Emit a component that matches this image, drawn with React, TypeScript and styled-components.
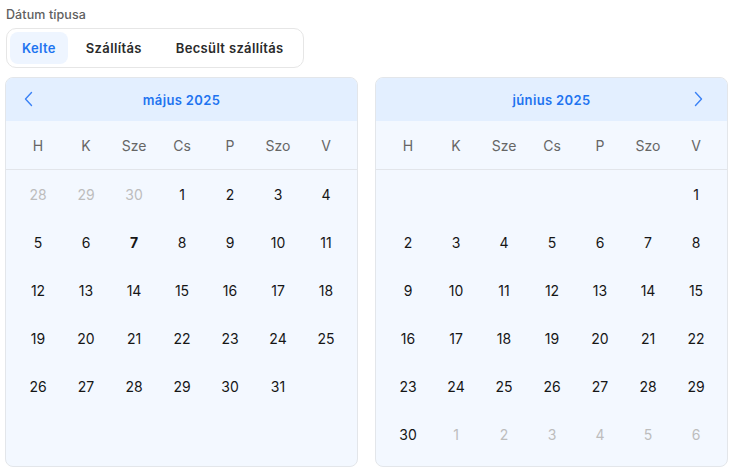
import React from "react";
import styled, { createGlobalStyle } from "styled-components";

const Global = createGlobalStyle`
  html, body { margin: 0; padding: 0; background: #ffffff; }
  body { font-family: "Inter", "DejaVu Sans", sans-serif; }
`;

const Page = styled.div`
  padding: 6px 5px 0 5px;
  display: flex;
  flex-direction: column;
`;

const Label = styled.div`
  font-size: 12.5px;
  color: #606060;
  font-weight: 500;
  line-height: 18px;
  padding-left: 1px;
  margin-bottom: 4px;
  letter-spacing: 0.1px;
`;

const TabGroup = styled.div`
  display: flex;
  align-self: flex-start;
  box-sizing: border-box;
  margin-left: 1px;
  padding: 3px;
  gap: 2px;
  border: 1px solid #e6e6e6;
  border-radius: 10px;
  height: 40px;
  background: #fff;
`;

const Tab = styled.button<{ $active?: boolean }>`
  border: none;
  font-family: inherit;
  font-size: 13px;
  font-weight: 600;
  letter-spacing: 0.35px;
  padding: 0 ${(p) => (p.$active ? "12px" : "16px")};
  border-radius: 8px;
  background: ${(p) => (p.$active ? "#eef5ff" : "transparent")};
  color: ${(p) => (p.$active ? "#1f74f0" : "#2a2a2a")};
  cursor: pointer;
`;

const Calendars = styled.div`
  display: flex;
  gap: 17px;
  margin-top: 9px;
`;

const Card = styled.div`
  width: 353px;
  height: 390px;
  box-sizing: border-box;
  border: 1px solid #e3e6ea;
  border-radius: 8px;
  background: #f3f8ff;
  overflow: hidden;
  display: flex;
  flex-direction: column;
`;

const Header = styled.div`
  height: 43px;
  background: #e3efff;
  display: flex;
  align-items: center;
  justify-content: center;
  position: relative;
  font-size: 13px;
  font-weight: 600;
  letter-spacing: 0.35px;
  color: #1f74f0;
`;

const NavButton = styled.span<{ $side: "left" | "right" }>`
  position: absolute;
  top: 12px;
  ${(p) => (p.$side === "left" ? "left: 14px;" : "right: 21px;")}
  width: 16px;
  height: 18px;
  display: flex;
  align-items: center;
  justify-content: center;
`;

const WeekRow = styled.div`
  display: grid;
  grid-template-columns: repeat(7, 48px);
  justify-content: center;
  height: 48px;
  align-items: center;
  border-bottom: 1px solid #e2e5ea;
  padding-left: 1px;
`;

const WeekDay = styled.div`
  text-align: center;
  font-size: 14px;
  color: #666;
  padding-top: 1px;
`;

const Grid = styled.div`
  display: grid;
  grid-template-columns: repeat(7, 48px);
  grid-auto-rows: 48px;
  justify-content: center;
  padding-left: 1px;
`;

const Day = styled.div<{ $muted?: boolean; $today?: boolean }>`
  display: flex;
  align-items: center;
  justify-content: center;
  font-size: 14px;
  font-weight: ${(p) => (p.$today ? 700 : 400)};
  color: ${(p) => (p.$muted ? "#bdbdbd" : "#161616")};
`;

const Chevron = ({ dir }: { dir: "left" | "right" }) => (
  <svg width="9" height="16" viewBox="0 0 9 16" fill="none">
    <path
      d={dir === "left" ? "M7.5 1.5 L1.5 8 L7.5 14.5" : "M1.5 1.5 L7.5 8 L1.5 14.5"}
      stroke="#3b82f6"
      strokeWidth="1.4"
      strokeLinecap="round"
      strokeLinejoin="round"
    />
  </svg>
);

const weekdays = ["H", "K", "Sze", "Cs", "P", "Szo", "V"];

type Cell = { n?: number; muted?: boolean; today?: boolean };

const may: Cell[] = [
  { n: 28, muted: true },
  { n: 29, muted: true },
  { n: 30, muted: true },
  ...Array.from({ length: 31 }, (_, i) => ({ n: i + 1, today: i + 1 === 7 })),
];

const june: Cell[] = [
  ...Array.from({ length: 6 }, () => ({})),
  ...Array.from({ length: 30 }, (_, i) => ({ n: i + 1 })),
  ...Array.from({ length: 6 }, (_, i) => ({ n: i + 1, muted: true })),
];

const Calendar = ({ title, cells, nav }: { title: string; cells: Cell[]; nav: "left" | "right" }) => (
  <Card>
    <Header>
      <NavButton $side={nav}>
        <Chevron dir={nav} />
      </NavButton>
      {title}
    </Header>
    <WeekRow>
      {weekdays.map((w) => (
        <WeekDay key={w}>{w}</WeekDay>
      ))}
    </WeekRow>
    <Grid>
      {cells.map((c, i) => (
        <Day key={i} $muted={c.muted} $today={c.today}>
          {c.n ?? ""}
        </Day>
      ))}
    </Grid>
  </Card>
);

export default function App() {
  return (
    <>
      <Global />
      <Page>
        <Label>Dátum típusa</Label>
        <TabGroup>
          <Tab $active>Kelte</Tab>
          <Tab>Szállítás</Tab>
          <Tab>Becsült szállítás</Tab>
        </TabGroup>
        <Calendars>
          <Calendar title="május 2025" cells={may} nav="left" />
          <Calendar title="június 2025" cells={june} nav="right" />
        </Calendars>
      </Page>
    </>
  );
}
